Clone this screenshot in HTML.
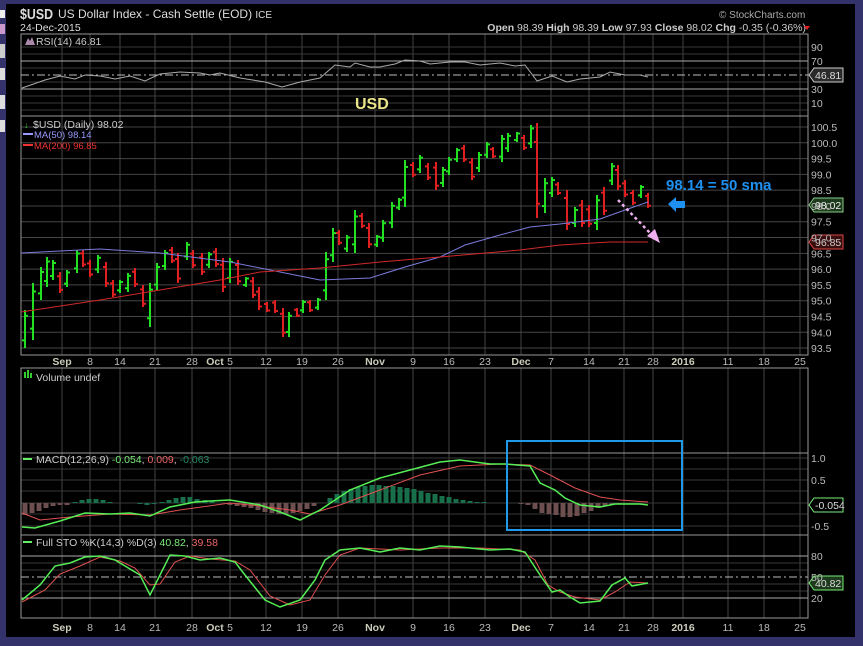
<!DOCTYPE html>
<html><head><meta charset="utf-8"><style>
html,body{margin:0;padding:0;background:#33326a;}
#c{position:absolute;left:6px;top:4px;width:849px;height:633px;background:#000;}
svg{position:absolute;left:0;top:0;}
text{font-family:"Liberation Sans",sans-serif;}
</style></head><body>
<div id="c"></div>
<div style="position:absolute;left:0;top:10px;width:5px;height:8px;background:#eee"></div>
<div style="position:absolute;left:0;top:24px;width:5px;height:10px;background:#c9c"></div>
<div style="position:absolute;left:0;top:44px;width:5px;height:14px;background:#ccc"></div>
<div style="position:absolute;left:0;top:68px;width:5px;height:12px;background:#ddd"></div>
<div style="position:absolute;left:0;top:95px;width:5px;height:14px;background:#ddd"></div>
<div style="position:absolute;left:0;top:120px;width:5px;height:12px;background:#ddd"></div>
<svg id="s" width="863" height="646" xmlns="http://www.w3.org/2000/svg">
<g id="grid"></g>
<g id="data"></g>
<g font-size="10" fill="#ccc">
<text x="20" y="19" font-size="15" font-weight="bold" fill="#ddd" textLength="33" lengthAdjust="spacingAndGlyphs">$USD</text>
<text x="58" y="18" font-size="12" fill="#ddd">US Dollar Index - Cash Settle (EOD) <tspan font-size="10">ICE</tspan></text>
<text x="20" y="31" font-size="10.5" fill="#ddd">24-Dec-2015</text>
<text x="719" y="18" font-size="10" fill="#aaa">© StockCharts.com</text>
<text x="806" y="31" font-size="10.5" text-anchor="end" fill="#ccc"><tspan font-weight="bold">Open</tspan> 98.39  <tspan font-weight="bold">High</tspan> 98.39  <tspan font-weight="bold">Low</tspan> 97.93  <tspan font-weight="bold">Close</tspan> 98.02  <tspan font-weight="bold">Chg</tspan> -0.35 (-0.36%)</text>
<path d="M804 26 L810 26 L807 30Z" fill="#e02020"/>
<text x="36" y="45" font-size="10.5" fill="#ccc">RSI(14) 46.81</text>
<path d="M25 45 L28 38 L30 41 L32 37 L35 45Z" fill="#a8a"/>
<text x="33" y="128" font-size="10.5" fill="#ccc">$USD (Daily) 98.02</text>
<text x="24" y="128" font-size="9" fill="#3c3" font-weight="bold">↓</text>
<line x1="23" y1="134" x2="33" y2="134" stroke="#99f" stroke-width="2"/>
<text x="34" y="138" font-size="9.5" fill="#99f">MA(50) 98.14</text>
<line x1="23" y1="145" x2="33" y2="145" stroke="#e33" stroke-width="2"/>
<text x="34" y="149" font-size="9.5" fill="#e33">MA(200) 96.85</text>
<text x="355" y="109" font-size="16" font-weight="bold" fill="#ebe58a">USD</text>
<text x="666" y="190" font-size="15" font-weight="bold" fill="#1e90f0">98.14 = 50 sma</text>
<path d="M668 204 L676 197 L676 201 L685 201 L685 208 L676 208 L676 212Z" fill="#1e90f0"/>
<line x1="618" y1="200" x2="652" y2="235" stroke="#f0b0f0" stroke-width="2.5" stroke-dasharray="3,3"/>
<path d="M660 243 L647 236 L655 229Z" fill="#f0b0f0"/>
<rect x="507" y="441" width="175" height="89" fill="none" stroke="#1e9ae8" stroke-width="2"/>
<rect x="24" y="372" width="2" height="6" fill="#3c3"/><rect x="27" y="370" width="2" height="8" fill="#3c3"/><rect x="30" y="373" width="2" height="5" fill="#3c3"/>
<text x="36" y="381" font-size="10.5" fill="#ccc">Volume undef</text>
<line x1="23" y1="459" x2="32" y2="459" stroke="#6e6" stroke-width="2"/>
<text x="36" y="463" font-size="10.5" fill="#ccc">MACD(12,26,9) <tspan fill="#7e7">-0.054</tspan>, <tspan fill="#e66">0.009</tspan>, <tspan fill="#286">-0.063</tspan></text>
<line x1="23" y1="542" x2="32" y2="542" stroke="#6e6" stroke-width="2"/>
<text x="36" y="546" font-size="10.5" fill="#ccc">Full STO %K(14,3) %D(3) <tspan fill="#7e7">40.82</tspan>, <tspan fill="#e66">39.58</tspan></text>
</g>
<g id="axis" font-size="10.5" fill="#bbb"></g>
</svg>
<script>
var NS="http://www.w3.org/2000/svg";
function el(p,t,a,txt){var e=document.createElementNS(NS,t);for(var k in a)e.setAttribute(k,a[k]);if(txt!==undefined)e.textContent=txt;document.getElementById(p).appendChild(e);return e;}
var L=21,R=808;
var GC="#454545";
var vx=[62,90,120,155,192,230,266,302,338,375,413,449,485,521,551,589,624,653,683,728,764,800];
var panels=[[34,116],[116,355],[368,453],[453,535],[535,618]];
panels.forEach(function(p){vx.forEach(function(x){el("grid","line",{x1:x,y1:p[0],x2:x,y2:p[1],stroke:GC});});});
[47,54,68,82,96,103,110].forEach(function(y){el("grid","line",{x1:L,y1:y,x2:R,y2:y,stroke:"#383838"});});
[61,89].forEach(function(y){el("grid","line",{x1:L,y1:y,x2:R,y2:y,stroke:"#aaa"});});
el("grid","line",{x1:L,y1:75,x2:R,y2:75,stroke:"#bbb","stroke-dasharray":"8,3,2,3"});
[["90",47],["70",61],["30",89],["10",103]].forEach(function(a){el("axis","text",{x:811,y:a[1]+4},a[0]);});
for(var k=0;k<=14;k++){var y=127+k*15.79;el("grid","line",{x1:L,y1:y,x2:R,y2:y,stroke:GC});el("axis","text",{x:811,y:y+4},(100.5-k*0.5).toFixed(1));}
[458,469,480,491,503,514,526].forEach(function(y){el("grid","line",{x1:L,y1:y,x2:R,y2:y,stroke:"#383838"});});
[["1.0",458],["0.5",480],["-0.5",526]].forEach(function(a){el("axis","text",{x:811,y:a[1]+4},a[0]);});
[563,570,584,591].forEach(function(y){el("grid","line",{x1:L,y1:y,x2:R,y2:y,stroke:"#383838"});});
[556,598].forEach(function(y){el("grid","line",{x1:L,y1:y,x2:R,y2:y,stroke:"#aaa"});});
el("grid","line",{x1:L,y1:577,x2:R,y2:577,stroke:"#bbb","stroke-dasharray":"8,3,2,3"});
[["80",556],["50",577],["20",598]].forEach(function(a){el("axis","text",{x:811,y:a[1]+4},a[0]);});
panels.forEach(function(p){el("grid","rect",{x:L,y:p[0],width:R-L,height:p[1]-p[0],fill:"none",stroke:"#999"});});
var dl=[["Sep",62,1],["8",90],["14",120],["21",155],["28",192],["Oct",215,1],["5",230],["12",266],["19",302],["26",338],["Nov",375,1],["9",413],["16",449],["23",485],["Dec",521,1],["7",551],["14",589],["21",624],["28",653],["2016",683,1],["11",728],["18",764],["25",800]];
[365,631].forEach(function(y){dl.forEach(function(d){var t=el("axis","text",{x:d[1],y:y,"text-anchor":"middle"},d[0]);if(d[2]){t.setAttribute("font-weight","bold");t.setAttribute("fill","#ccb");}});});
function poly(pts,col,w){var s=pts.map(function(p){return p[0]+","+p[1]}).join(" ");el("data","polyline",{points:s,fill:"none",stroke:col,"stroke-width":w||1});}
var bars=[[25,310,348,"G"],[33,283,340,"G"],[41,267,300,"G"],[47,257,287,"G"],[53,260,280,"G"],[60,272,293,"R"],[67,270,287,"G"],[77,250,273,"G"],[83,250,267,"R"],[90,260,277,"R"],[98,255,273,"G"],[106,262,287,"R"],[113,280,297,"R"],[120,280,293,"G"],[128,273,292,"G"],[135,268,287,"R"],[143,285,307,"R"],[150,283,327,"G"],[157,263,290,"G"],[165,250,270,"G"],[172,247,263,"R"],[178,253,283,"R"],[187,242,260,"G"],[193,250,268,"R"],[202,253,275,"R"],[209,252,268,"G"],[216,248,267,"R"],[223,258,292,"R"],[230,258,283,"G"],[238,260,285,"R"],[246,277,287,"G"],[253,277,298,"R"],[259,287,310,"R"],[267,302,312,"R"],[275,300,313,"R"],[283,308,337,"R"],[289,312,337,"G"],[297,308,317,"R"],[303,300,313,"G"],[310,300,312,"R"],[318,298,310,"G"],
[326,252,300,"G"],[333,228,262,"G"],[339,230,245,"R"],[347,235,252,"G"],[355,210,253,"G"],[362,213,228,"R"],[369,223,248,"R"],[377,235,247,"G"],[383,220,242,"G"],[392,202,228,"G"],[399,198,210,"G"],[405,160,207,"G"],[413,162,177,"R"],[420,155,173,"G"],[428,163,180,"R"],[436,162,190,"R"],[443,167,187,"G"],[449,157,175,"G"],[457,148,162,"G"],[464,145,162,"R"],[472,158,180,"R"],[479,152,172,"G"],[487,142,158,"G"],[493,147,158,"R"],[502,135,162,"G"],[508,133,152,"G"],[517,132,142,"G"],[524,135,150,"R"],[531,125,148,"G"],[537,123,218,"R"],[545,178,213,"G"],[552,177,197,"G"],[558,182,195,"R"],[567,190,230,"R"],[575,207,227,"G"],[582,200,227,"R"],[589,205,227,"R"],[597,195,230,"G"],[604,187,215,"R"],[612,163,185,"G"],[618,165,190,"R"],[625,180,197,"R"],[633,190,205,"R"],[641,185,198,"G"],[648,193,208,"R"]];
bars.forEach(function(b){var c=b[3]=="G"?"#22e022":"#e02020";var h=b[2]-b[1];var o=b[3]=="G"?b[2]-h*0.2:b[1]+h*0.2,cl=b[3]=="G"?b[1]+h*0.15:b[2]-h*0.15;
el("data","path",{d:"M"+b[0]+" "+b[1]+"V"+b[2]+"M"+(b[0]-3)+" "+o+"H"+b[0]+"M"+b[0]+" "+cl+"H"+(b[0]+3),stroke:c,"stroke-width":2,fill:"none"});});
poly([[21,253],[60,251],[100,249],[160,253],[230,262],[300,276],[320,280],[370,278],[405,267],[440,257],[465,245],[500,235],[530,227],[560,224],[600,219],[625,210],[648,202]],"#7b7bdd");
poly([[21,312],[100,300],[220,280],[260,272],[320,268],[380,262],[440,257],[520,250],[560,245],[610,242],[648,242]],"#d02828");
poly([[22,88],[45,80],[60,76],[75,79],[85,75],[100,76],[115,79],[130,76],[145,81],[160,74],[180,72],[200,73],[210,75],[220,73],[240,78],[265,82],[282,87],[300,82],[320,78],[335,65],[350,67],[355,63],[370,67],[380,67],[395,64],[405,60],[420,61],[430,64],[450,62],[465,62],[480,65],[500,63],[515,66],[525,65],[537,81],[552,76],[567,82],[580,79],[600,77],[610,72],[625,75],[640,75],[648,77]],"#aaa");
function hb(x,v,c){var y0=503;el("data","rect",{x:x-2.5,y:Math.min(y0,y0-v),width:5,height:Math.abs(v)||1,fill:c});}
var neg="#6e4f4f",pos="#17704a";
[[25,-12],[32,-10],[39,-8],[46,-5],[53,-3],[60,-2],[67,-2]].forEach(function(a){hb(a[0],a[1],neg)});
[[75,1],[82,3],[89,4],[96,4],[103,3],[110,1]].forEach(function(a){hb(a[0],a[1],pos)});
[[140,-1],[147,-2],[154,-1],[162,1],[169,3],[176,5],[183,6],[190,6],[197,4],[205,3],[212,2]].forEach(function(a){hb(a[0],a[1],pos)});
[[230,-2],[237,-3],[244,-4],[251,-5],[258,-7],[265,-9],[272,-10],[279,-11],[286,-11],[293,-10],[300,-8],[307,-6],[314,-3]].forEach(function(a){hb(a[0],a[1],neg)});
[[330,5],[337,9],[344,12],[351,14],[358,16],[365,17],[372,18],[379,18],[386,17],[393,17],[400,16],[407,15],[414,14],[421,12],[428,10],[435,9],[442,7],[449,6],[456,4],[463,3],[470,2],[477,1],[484,1]].forEach(function(a){hb(a[0],a[1],pos)});
[[521,-1],[528,-2],[535,-6],[542,-10],[549,-11],[556,-12],[563,-14],[570,-14],[577,-13],[584,-10],[591,-8],[598,-5],[605,-3],[612,-2],[619,-1]].forEach(function(a){hb(a[0],a[1],neg)});
poly([[22,513],[40,520],[70,517],[110,514],[150,515],[180,510],[230,503],[260,506],[290,510],[310,514],[340,505],[380,490],[420,475],[460,466],[500,464],[530,465],[550,475],[575,488],[600,497],[620,500],[648,502]],"#e05050");
poly([[22,527],[35,528],[60,521],[85,513],[110,514],[130,513],[150,516],[170,507],[195,502],[210,501],[230,500],[260,505],[280,512],[300,520],[320,510],[350,490],[380,478],[410,470],[440,462],[460,460],[490,464],[505,464],[530,466],[540,483],[555,490],[565,498],[580,505],[600,507],[615,504],[640,504],[648,505]],"#55ee55",1.5);
var k=[[22,600],[40,585],[55,566],[70,563],[85,557],[100,556],[115,560],[125,566],[140,575],[150,595],[160,575],[170,555],[185,556],[200,560],[220,558],[235,562],[245,575],[265,600],[280,607],[300,600],[315,580],[325,560],[340,550],[360,548],[380,552],[400,548],[420,550],[440,546],[460,547],[490,550],[510,549],[525,552],[540,575],[552,592],[560,590],[570,597],[580,603],[600,601],[612,585],[625,578],[632,586],[648,583]];
var d=[[22,602],[45,590],[60,574],[80,566],[100,557],[120,561],[135,568],[150,585],[160,584],[175,562],[190,556],[210,559],[235,561],[250,570],[270,596],[290,605],[310,600],[325,575],[340,555],[360,548],[400,550],[440,548],[480,548],[520,550],[535,560],[548,585],[560,592],[575,597],[600,600],[615,592],[630,582],[648,583]];
poly(d,"#e05050");
poly(k,"#55ee55",1.5);
function tag(y,txt,bg,bd,fc){el("data","path",{d:"M809 "+y+" L814 "+(y-7)+" H843 V"+(y+7)+" H814Z",fill:bg,stroke:bd});el("data","text",{x:815,y:y+4,"font-size":"10.5",fill:fc,"font-family":"Liberation Sans"},txt);}
tag(75,"46.81","#2a2a2a","#ccc","#ddd");
tag(205,"98.02","#1d3a1d","#8c8","#eee");
tag(242,"96.85","#3a0e0e","#d44","#ccc");
tag(505,"-0.054","#000","#7e7","#ddd");
tag(583,"40.82","#1d3a1d","#7e7","#ddd");
</script>
</body></html>
